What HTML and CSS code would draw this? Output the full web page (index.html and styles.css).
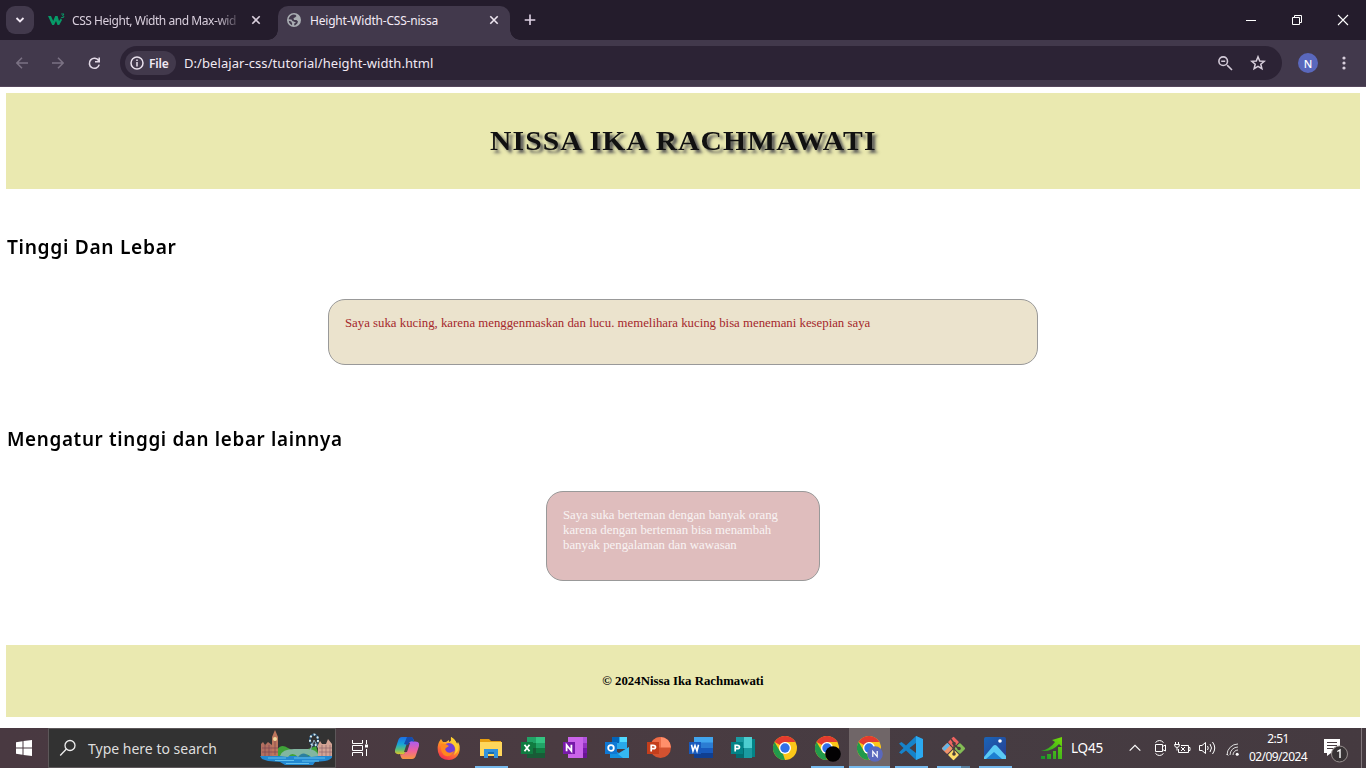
FILE: index.html
```html
<!DOCTYPE html>
<html lang="id">
<head>
<meta charset="utf-8">
<title>Height-Width-CSS-nissa</title>
<link rel="stylesheet" href="styles.css">
</head>
<body>
<svg class="defs" width="0" height="0">
  <defs>
    <linearGradient id="cop1" x1="0" y1="0" x2="0" y2="1"><stop offset="0" stop-color="#1b6ee8"/><stop offset=".4" stop-color="#17a5d8"/><stop offset=".7" stop-color="#5abf7a"/><stop offset="1" stop-color="#f4c51c"/></linearGradient>
    <linearGradient id="cop2" x1="0" y1="0" x2="0" y2="1"><stop offset="0" stop-color="#a65cf5"/><stop offset=".55" stop-color="#f0619a"/><stop offset="1" stop-color="#f6963f"/></linearGradient>
    <linearGradient id="fox" x1=".8" y1="0" x2=".3" y2="1"><stop offset="0" stop-color="#fff04a"/><stop offset=".45" stop-color="#ff9a22"/><stop offset="1" stop-color="#f52c52"/></linearGradient>
    <linearGradient id="chart" x1="0" y1="1" x2="1" y2="0"><stop offset="0" stop-color="#15922c"/><stop offset="1" stop-color="#75dc08"/></linearGradient>
    <linearGradient id="photo" x1="0" y1="0" x2="1" y2="1"><stop offset="0" stop-color="#1a65b8"/><stop offset="1" stop-color="#283e91"/></linearGradient>
    <symbol id="chrome" viewBox="0 0 24 24">
      <circle cx="12" cy="12" r="12" fill="#fbc719"/>
      <path d="M1.6 6A12 12 0 0 1 22.4 6H12L7 9z" fill="#e33b2e"/>
      <path d="M1.6 6L6.8 15A6 6 0 0 0 12 18L12 24A12 12 0 0 1 1.6 6z" fill="#229a4b"/>
      <path d="M17.2 15L12 24 10 18z" fill="#fbc719"/>
      <circle cx="12" cy="12" r="6" fill="#fff"/><circle cx="12" cy="12" r="4.7" fill="#3070e8"/>
    </symbol>
  </defs>
</svg>
<div class="screen">
  <header class="tabs">
    <div class="tab-menu"><svg width="10" height="8" viewBox="0 0 10 8"><path d="M1.5 2L5 5.5 8.5 2" fill="none" stroke="#f1e8f4" stroke-width="1.8"/></svg></div>
    <div class="tab">
      <svg width="17" height="14" viewBox="0 0 17 14"><path d="M0 3H3L5.2 8 7.2 3H9.6L11 8 13 5.3 14 7 11.2 12H9.5L8 8 6 12H4.2z" fill="#079a68"/><path d="M13.2 1H16L14.5 2.8Q16 2.8 16 3.8 15.6 5 13.2 4.5" fill="none" stroke="#079a68"/></svg>
      <span class="tab-title faded">CSS Height, Width and Max-wid</span>
      <svg class="close" width="10" height="10" viewBox="0 0 10 10"><path d="M1.3 1.3L8.7 8.7M8.7 1.3L1.3 8.7" stroke="#d9cfdd" stroke-width="1.6"/></svg>
    </div>
    <div class="tab active">
      <svg width="14" height="14" viewBox="0 0 14 14"><circle cx="7" cy="7" r="7" fill="#a9adb2"/><path d="M6 1.5L8.4 1.7 9.5 3 8 4.5 6.5 5 7 7H9.5L11 8.4 10.3 10.5 8 12.5 7.2 12.3V10.5L9 9.4 5.5 8 4.5 6.5 1.5 6.3Q2.3 2.8 6 1.5z" fill="#42394c"/><path d="M1.8 7.8L4.2 8.6 5.2 10.8 5 12.2Q1.8 10.7 1.8 7.8" fill="#42394c"/></svg>
      <span class="tab-title">Height-Width-CSS-nissa</span>
      <svg class="close" width="10" height="10" viewBox="0 0 10 10"><path d="M1.3 1.3L8.7 8.7M8.7 1.3L1.3 8.7" stroke="#eee6f0" stroke-width="1.6"/></svg>
    </div>
    <svg class="plus" width="12" height="12" viewBox="0 0 12 12"><path d="M6 .5V11M.7 6H11.3" stroke="#dfd2e5" stroke-width="1.6"/></svg>
    <div class="window-buttons">
      <svg width="46" height="40" viewBox="0 0 46 40"><path d="M18 20.5H28" stroke="#fff"/></svg>
      <svg width="46" height="40" viewBox="0 0 46 40"><path d="M18.5 17.5H25.5V24.5H18.5ZM20.5 17V15.5H27.5V22.5H26" fill="none" stroke="#fff"/></svg>
      <svg width="46" height="40" viewBox="0 0 46 40"><path d="M18 15L28 25M28 15L18 25" stroke="#fff" stroke-width="1.1"/></svg>
    </div>
  </header>
  <nav class="toolbar">
    <svg width="12" height="12" viewBox="0 0 12 12"><path d="M12 6H1.2M6 .8L.9 6 6 11.2" fill="none" stroke="#7b7284" stroke-width="1.5"/></svg>
    <svg width="12" height="12" viewBox="0 0 12 12"><path d="M0 6H10.8M6 .8L11.1 6 6 11.2" fill="none" stroke="#7b7284" stroke-width="1.5"/></svg>
    <svg width="13" height="13" viewBox="0 0 13 13"><path d="M10.6 3.6A5 5 0 1 0 11.2 7.6M11.2.5V4.7H7" fill="none" stroke="#e2d9e6" stroke-width="1.6"/></svg>
    <div class="address">
      <div class="chip"><svg width="14" height="14" viewBox="0 0 14 14"><circle cx="7" cy="7" r="6" fill="none" stroke="#e9e1ed" stroke-width="1.5"/><path d="M7 6V10.4M7 3.4V5" stroke="#e9e1ed" stroke-width="1.5"/></svg><span>File</span></div>
      <span class="url">D:/belajar-css/tutorial/height-width.html</span>
      <svg class="lens" width="15" height="15" viewBox="0 0 15 15"><path d="M9.1 9.1L14 14M3.2 5.2H7.2" stroke="#d2c9d7" stroke-width="1.6"/><circle cx="5.2" cy="5.2" r="4.3" fill="none" stroke="#d2c9d7" stroke-width="1.6"/></svg>
      <svg class="star" width="16" height="16" viewBox="0 0 16 16"><path d="M8 1.8L9.7 6 14.3 6.3 10.8 9.2 11.9 13.7 8 11.3 4.1 13.7 5.2 9.2 1.7 6.3 6.3 6z" fill="none" stroke="#d8cfdc" stroke-width="1.5"/></svg>
    </div>
    <div class="avatar">N</div>
    <svg class="dots" width="4" height="14" viewBox="0 0 4 14" fill="#d8cfdc"><circle cx="2" cy="2" r="1.6"/><circle cx="2" cy="7" r="1.6"/><circle cx="2" cy="12" r="1.6"/></svg>
  </nav>
  <main class="page">
    <div class="banner"><h1>NISSA IKA RACHMAWATI</h1></div>
    <h2 class="first">Tinggi Dan Lebar</h2>
    <div class="box cats">Saya suka kucing, karena menggenmaskan dan lucu. memelihara kucing bisa menemani kesepian saya</div>
    <h2 class="second">Mengatur tinggi dan lebar lainnya</h2>
    <div class="box friends">Saya suka berteman dengan banyak orang karena dengan berteman bisa menambah banyak pengalaman dan wawasan</div>
    <footer class="foot"><span>© 2024Nissa Ika Rachmawati</span></footer>
  </main>
  <div class="taskbar">
    <div class="start"><svg width="16" height="16" viewBox="0 0 16 16" fill="#fff"><path d="M0 2.2L6.5 1.3V7.5H0zM7.5 1.1L16 0V7.5H7.5zM0 8.5H6.5V14.7L0 13.8zM7.5 8.5H16V16L7.5 14.9z"/></svg></div>
    <div class="search">
      <svg width="18" height="18" viewBox="0 0 18 18"><circle cx="11" cy="6.5" r="5" fill="none" stroke="#eee" stroke-width="1.3"/><path d="M7.4 10L1.2 16.5" stroke="#eee" stroke-width="1.3"/></svg>
      <span>Type here to search</span>
      <svg class="london" width="73" height="36" viewBox="0 0 73 36">
        <path d="M0 26H72Q73 29 65 31L55 32 53 35H25L20 32 8 31 2 29z" fill="#2389d2"/><path d="M8 28H26M34 28H65M15 30.5H34M42 31H59M26 33.5H49" stroke="#62c1ed"/>
        <path d="M17 20Q21 13 28 18L36 22 48 19 56 16 59 26H17z" fill="#3fa238"/>
        <path d="M20 26Q22 19 34 19H48Q56 19 59 26L51 27Q47 22 43 27H38Q32 21 28 27z" fill="#82b6a1"/><path d="M38 27Q43 20 50 27z" fill="#2c7f9e"/>
        <path d="M1 14L3 12 5 15 8 12 12 15V26H1z" fill="#b26f60"/><path d="M12 7L15 0 18 7V26H12z" fill="#bd765d"/><path d="M2 18H18M2 22H18M5 15V26M9 15V26M15 11V25" stroke="#7b4650" stroke-width=".7"/><circle cx="15" cy="9" r="2" fill="#f4dc9e"/>
        <ellipse cx="54" cy="10" rx="4" ry="5.5" fill="none" stroke="#244c6d" stroke-width="2"/><ellipse cx="54" cy="10" rx="4" ry="5.5" fill="none" stroke="#d7ebf2" stroke-width="2" stroke-dasharray="2 2.3"/><path d="M54 10L50 21M54 10L60 21" stroke="#8ca9bd"/>
        <path d="M58 15L60 11 62 14H66L68 9 72 14V26H58z" fill="#d2a394"/><path d="M59 18H72M59 22H72M62 15V26M66 15V26M70 15V26" stroke="#865e66" stroke-width=".6"/>
      </svg>
    </div>
    <div class="taskview"><svg width="18" height="16" viewBox="0 0 18 16"><path d="M1.5 0V3.5H11.5V0M1.5 16V12.5H11.5V16M1.5 5.5H11.5V10.5H1.5zM15.5 0V4M15.5 9V16" fill="none" stroke="#fff"/><path d="M14 4.5H17V7.5H14z" fill="#fff"/></svg></div>
    <div class="app"><svg width="24" height="22" viewBox="0 0 24 22"><path d="M7 0H16Q18 0 19 4L17 5Q14 4 13 8L10 16Q9 19 5 17Q-1 18 0 13L3 4Q4 0 7 0z" fill="url(#cop1)"/><path d="M17 22H8Q6 22 5 17Q9 19 11 14L14 6Q15 3 19 4.5Q25 4 24 9L21 18Q20 22 17 22z" fill="url(#cop2)"/><path d="M12 6H15L12 15H9z" fill="#4b3f43"/><path d="M12 0H16Q18 0 19 4.5Q14 3 13 8L9 7z" fill="#174cad"/></svg></div>
    <div class="app"><svg width="24" height="24" viewBox="0 0 24 24"><path d="M2 6L4 3 6 6H9L12 4 12 6Q15 5 14 1Q18 3 20 8L21 6Q24 11 22 17Q19 24 12 24Q3 24 1 16Q0 10 2 6z" fill="url(#fox)"/><circle cx="12" cy="13" r="6" fill="#7340d4"/><path d="M4 8Q8 7 12 10L9 12Q7 13 10 16Q13 18 17 15Q15 21 9 20Q3 18 4 8z" fill="#ff871f"/><path d="M14 1Q13 6 17 9Q20 13 17 19Q24 14 20 8Q18 3 14 1z" fill="#ffce2f"/></svg></div>
    <div class="app open"><svg width="22" height="20" viewBox="0 0 22 20"><path d="M0 1H9L11 3H21V18H0z" fill="#e79e0f"/><path d="M0 4H22V18H0z" fill="#ffd65b"/><path d="M4 11H18V20H14V16H8V20H4z" fill="#3292dc"/><path d="M8 14H14V16H8z" fill="#176db0"/></svg></div>
    <div class="app"><svg width="24" height="22" viewBox="0 0 24 22"><path d="M6 0H24V21H6z" fill="#21a366"/><path d="M15 0H24V6H15z" fill="#33c481"/><path d="M6 6H15V11H6z" fill="#107c41"/><path d="M6 11H24V21H6z" fill="#185c37"/><path d="M15 11H24V16H15z" fill="#107c41"/><rect y="5" width="12" height="12" fill="#107c41"/><path d="M3.5 7.8L8.5 14.2M8.5 7.8L3.5 14.2" stroke="#fff" stroke-width="1.8"/></svg></div>
    <div class="app"><svg width="24" height="22" viewBox="0 0 24 22"><path d="M5 0H24V21H5z" fill="#ca64ea"/><path d="M20 0H24V6H20z" fill="#b052dd"/><path d="M20 6H24V11H20z" fill="#9332bf"/><path d="M20 11H24V16H20z" fill="#7719aa"/><path d="M20 16H24V21H20z" fill="#6a1494"/><rect y="5" width="12" height="12" fill="#7719aa"/><path d="M3.6 14.2V8L8.4 14V7.8" fill="none" stroke="#fff" stroke-width="1.8"/></svg></div>
    <div class="app"><svg width="24" height="22" viewBox="0 0 24 22"><path d="M7 0H22V12H7z" fill="#28a8ea"/><path d="M7 0H14V6H7z" fill="#0364b8"/><path d="M15 0H22V5H15z" fill="#50d9ff"/><path d="M5 11L14 16 24 10V21H5z" fill="#1490df"/><path d="M24 10L13 17 18 21H24z" fill="#35b8f1"/><rect y="5" width="12" height="12" fill="#0f78d4"/><circle cx="6" cy="11" r="2.8" fill="none" stroke="#fff" stroke-width="1.8"/></svg></div>
    <div class="app"><svg width="24" height="22" viewBox="0 0 24 22"><circle cx="13.5" cy="10.5" r="10.5" fill="#d35230"/><path d="M13.5 0A10.5 10.5 0 0 1 24 10.5H13.5z" fill="#ff8f6b"/><path d="M3 10.5A10.5 10.5 0 0 1 13.5 0V10.5z" fill="#ed6c47"/><rect y="5" width="12" height="12" fill="#c43e1c"/><path d="M4.2 14.4V8.3H6Q8.5 8.3 8.5 10T6 11.7H4" fill="none" stroke="#fff" stroke-width="1.7"/></svg></div>
    <div class="app"><svg width="24" height="22" viewBox="0 0 24 22"><path d="M5 0H24V21H5z" fill="#41a5ee"/><path d="M5 5.5H24V11H5z" fill="#2b7cd3"/><path d="M5 11H24V16H5z" fill="#185abd"/><path d="M5 16H24V21H5z" fill="#103f91"/><rect y="5" width="12" height="12" fill="#185abd"/><path d="M2.5 7.8L4 14 6 8.5 8 14 9.5 7.8" fill="none" stroke="#fff" stroke-width="1.6"/></svg></div>
    <div class="app"><svg width="24" height="22" viewBox="0 0 24 22"><path d="M13 2H24V20H13z" fill="#038387"/><path d="M5 0H21V21H5z" fill="#1a9ba1"/><path d="M13 0H21V11H13z" fill="#4cced0"/><path d="M5 11H13V21H5z" fill="#036c70"/><rect y="5" width="12" height="12" fill="#038387"/><path d="M4.2 14.4V8.3H6Q8.5 8.3 8.5 10T6 11.7H4" fill="none" stroke="#fff" stroke-width="1.7"/></svg></div>
    <div class="app"><svg width="24" height="24"><use href="#chrome" width="24" height="24"/></svg></div>
    <div class="app open badged"><svg width="26" height="26"><use href="#chrome" width="24" height="24"/><circle cx="18" cy="18" r="7.8" fill="#030203"/></svg></div>
    <div class="app open current badged"><svg width="26" height="26"><use href="#chrome" width="24" height="24"/><circle cx="18" cy="18" r="7.8" fill="#5a68bd"/><path d="M15.8 21V15.4L20.2 20.6V15" fill="none" stroke="#fff" stroke-width="1.2"/></svg></div>
    <div class="app open"><svg width="24" height="24" viewBox="0 0 24 24"><path d="M17 0L23 3V21L17 24 7 14.5 2.5 18 0 16.5 4.5 12 0 7.5 2.5 6 7 9.5zM17 7L10.5 12 17 17z" fill="#1683ca" fill-rule="evenodd"/><path d="M17 0L24 3V21L17 24z" fill="#2ba9f0"/></svg></div>
    <div class="app open grouped"><svg width="25" height="25" viewBox="0 0 25 25"><g transform="rotate(45 12.5 12.5)"><rect x="4" y="4" width="8" height="8" rx="1" fill="#f06360"/><rect x="13" y="4" width="8" height="8" rx="1" fill="#84bd55"/><rect x="4" y="13" width="8" height="8" rx="1" fill="#f0916b"/><rect x="13" y="13" width="8" height="8" rx="1" fill="#ffdd68"/></g><path d="M1 12.5L6.5 7 9 9.5 3.5 15z" fill="#63b5e8"/><path d="M10 3L13 7V19M13 7Q14 11 18 12" fill="none" stroke="#493d3c" stroke-width="1.4"/><circle cx="13" cy="7.5" r="1.8" fill="#493d3c"/><circle cx="18" cy="12.5" r="1.8" fill="#493d3c"/><circle cx="13" cy="18" r="1.8" fill="#493d3c"/></svg></div>
    <div class="app open"><svg width="22" height="22" viewBox="0 0 22 22"><rect width="22" height="22" rx="2" fill="url(#photo)"/><path d="M0 20L9 9Q11 7 13 9L22 19V22H0z" fill="#5acbf5"/><path d="M2 22L10 15 18 22z" fill="#1d7fd0"/><circle cx="16" cy="4" r="1.8" fill="#fff"/></svg></div>
    <div class="stock"><svg width="23" height="23" viewBox="0 0 23 23"><path d="M1 14Q10 12 15 5L12 3 22 0V10L19 7Q12 15 1 14zM1 19H5V22H1zM7 17H11V22H7zM13 14H16V22H13zM18 10H22V22H18z" fill="url(#chart)"/></svg><span>LQ45</span></div>
    <div class="tray">
      <svg width="12" height="8" viewBox="0 0 12 8"><path d="M.7 6.7L6 1.3 11.3 6.7" fill="none" stroke="#fff" stroke-width="1.2"/></svg>
      <svg class="meet" width="12" height="18" viewBox="0 0 12 18"><path d="M1.5 3.5Q5.5-.5 9.5 3.5M1.5 14.5Q5.5 18.5 9.5 14.5M1.5 5.5H8.5V12.5H1.5zM8.5 7.5L11.5 6V12L8.5 10.5" fill="none" stroke="#fff"/></svg>
      <svg class="battery" width="17" height="12" viewBox="0 0 17 12"><path d="M1.5 0V2.5M4.5 0V2.5M.5 2.5H5.5Q5.5 5.5 3 5.5T.5 2.5M3 5.5V8.5M7 3.5H14.5V10.5H4.5V7M15 5.5H16V8.5H15M7 5L11 9M11 5L7 9" fill="none" stroke="#fff"/></svg>
      <svg class="sound" width="17" height="14" viewBox="0 0 17 14"><path d="M.5 4.5H3L6.5 1.5V12.5L3 9.5H.5zM8.5 5Q10 7 8.5 9M11 3Q14 7 11 11M13.5 1Q18 7 13.5 13" fill="none" stroke="#fff"/></svg>
      <svg class="wifi" width="13" height="13" viewBox="0 0 13 13"><path d="M1 12A11 11 0 0 1 12 1M4 12A8 8 0 0 1 12 4M7 12A5 5 0 0 1 12 7" fill="none" stroke="#ddd"/><circle cx="11.2" cy="11.2" r="1.5" fill="#fff"/><path d="M.8 11L2.2 12.5" stroke="#fff"/></svg>
    </div>
    <div class="clock"><span class="time">2:51</span><span>02/09/2024</span></div>
    <div class="notice"><svg width="26" height="26" viewBox="0 0 26 26"><path d="M1 1H17V15H8L4 18V15H1z" fill="#fff"/><path d="M4 4.5H14M4 7.5H14M4 10.5H10" stroke="#4a3e43"/><circle cx="16.5" cy="16" r="8" fill="#383335" stroke="#98908f"/><path d="M14.3 13.5L17 12V20" fill="none" stroke="#fff" stroke-width="1.4"/></svg></div>
    <div class="peek"></div>
  </div>
</div>
</body>
</html>
```
FILE: styles.css
```css
*{box-sizing:border-box}
body{margin:0;background:#fff;font-family:"Noto Sans","Open Sans",sans-serif}
svg{display:block;flex:none}
.defs{position:absolute}
.screen{width:1366px;height:768px;display:grid;grid-template-rows:40px 47px 641px 40px;overflow:hidden}
.tabs{display:flex;align-items:center;background:#241c2c;color:#d9cfdd;font-size:12px}
.tab-menu{display:grid;place-items:center;width:28px;height:28px;margin-left:6px;border-radius:9px;background:#42394c}
.tab{display:flex;align-items:center;width:232px;height:40px;padding-left:14px}
.tab-title{margin-left:7px;padding-top:1px;line-height:20px;white-space:nowrap;width:168px}
.faded{letter-spacing:-.45px;mask-image:linear-gradient(90deg,#000 86%,transparent 102%)}
.close{margin-left:11px}
.tab.active{align-self:flex-end;margin-left:12px;height:34px;padding:0 0 6px 9px;border-radius:10px 10px 0 0;background:#42394c;color:#f3eaf5;position:relative}
.tab.active .tab-title{margin-left:9px;width:168px;letter-spacing:-.2px}
.tab.active::before,.tab.active::after{content:"";position:absolute;bottom:0;width:10px;height:10px;background:radial-gradient(circle at 0 0,transparent 9.5px,#42394c 10px)}
.tab.active::before{left:-10px}
.tab.active::after{right:-10px;transform:scaleX(-1)}
.plus{margin-left:14px}
.window-buttons{display:flex;margin-left:auto}
.toolbar{display:flex;align-items:center;background:#42394c;box-shadow:inset 0 -1px #55475c;padding:0 20px 1px 16px;gap:24px;color:#f1e9f3}
.address{display:flex;align-items:center;width:1162px;height:34px;margin-left:-5px;margin-right:-8px;padding-left:5px;border-radius:17px;background:#2c2335}
.chip{display:flex;align-items:center;gap:5px;width:51px;height:24px;padding-left:5px;border-radius:12px;background:#42394c;font-size:12px;font-weight:600;letter-spacing:-.2px}
.url{margin-left:8px;font-size:13px;letter-spacing:.07px;white-space:nowrap}
.lens{margin-left:auto}
.star{margin:0 16px 0 17px}
.avatar{display:grid;place-items:center;width:20px;height:20px;border-radius:50%;background:#5a68bd;color:#fff;font-size:11px;font-weight:500}
.page{padding:6px;background:#fff;color:#000;font-family:"Liberation Serif","Times New Roman",serif}
.banner{height:96px;display:flex;align-items:center;justify-content:center;background:#eae9b0}
h1{margin:0;font-size:27px;line-height:32px;letter-spacing:1px;color:#111;text-shadow:3px 3px 3px #555;white-space:nowrap;transform:scaleX(1.096)}
h2{margin:0;padding-left:1px;height:28px;font:600 20px/28px "Noto Sans",sans-serif;letter-spacing:.7px;transform-origin:left center}
.first{margin-top:44px;transform:scaleX(.96)}
.second{margin-top:60px;transform:scaleX(.942)}
.box{margin:38px auto 0;padding:16px;border:1px solid #999;border-radius:17px;font-size:12.8px;line-height:15px}
.cats{width:710px;height:66px;background:#ebe3cd;color:#a5282c}
.friends{width:274px;height:90px;background:#dfbdbd;color:#f8f3f3}
.foot{display:flex;align-items:center;justify-content:center;height:72px;margin-top:64px;background:#eae9b0;font-size:12.8px;font-weight:700}
.taskbar{display:flex;align-items:stretch;background:linear-gradient(90deg,#493941,#4a3b41 42%,#463c42 70%,#453a40);color:#fff}
.start{display:grid;place-items:center;width:48px}
.search{display:flex;align-items:center;width:288px;border:1px solid #5c5759;background:#323232;color:#dedede;font-size:14px;padding-left:10px}
.search span{margin-left:11px;width:150px;white-space:nowrap}
.london{margin-left:22px}
.taskview{display:grid;place-items:center;width:50px;padding-right:3px}
.app{display:grid;place-items:center;width:42px;position:relative}
.badged{padding:2px 0 0 2px}
.current{background:linear-gradient(90deg,transparent 1px,#706668 1px)}
.open::after{content:"";position:absolute;left:5px;right:4px;bottom:0;height:2px;background:#76b9ed}
.current::after{left:1px;right:0}
.grouped::after{background:linear-gradient(90deg,#76b9ed 73%,#587f9e 73%)}
.stock{display:flex;align-items:center;margin-left:24px;width:85px;gap:8px;font-size:13.5px;letter-spacing:-.2px}
.tray{display:flex;align-items:center;margin-left:4px;width:116px}
.meet{margin-left:13px}
.battery{margin-left:8px}
.sound{margin-left:8px}
.wifi{margin-left:10px;margin-top:3px}
.clock{width:66px;display:flex;flex-direction:column;align-items:center;justify-content:center;font-size:12px;line-height:18px;letter-spacing:-.6px;white-space:nowrap}
.notice{margin-left:12px;padding-top:10px}
.peek{margin-left:auto;width:5px;border-left:1px solid #81777c}
```
